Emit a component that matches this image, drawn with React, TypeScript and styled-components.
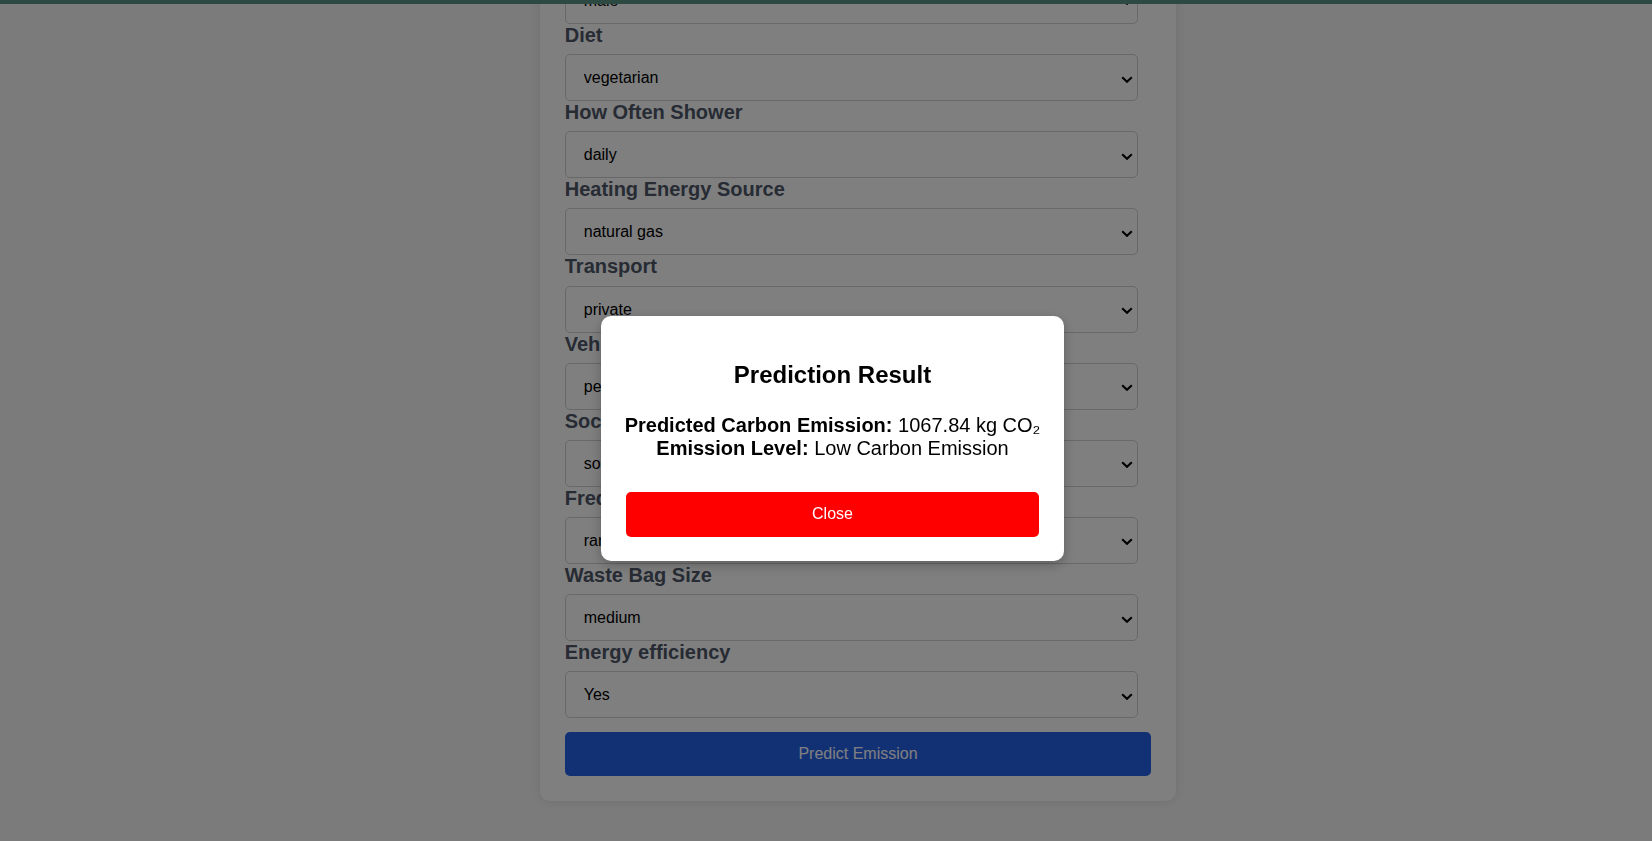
import React, { useState } from "react";
import styled, { createGlobalStyle } from "styled-components";

const GlobalStyle = createGlobalStyle`
  html, body {
    margin: 0;
    padding: 0;
    background: #f6f6f6;
    font-family: "Liberation Sans", Arial, sans-serif;
  }
  *, *::before, *::after { box-sizing: border-box; }
`;

const TopBar = styled.header`
  position: fixed;
  top: 0;
  left: 0;
  right: 0;
  height: 4px;
  background: #5a9484;
  z-index: 10;
`;

const Page = styled.main`
  display: flex;
  justify-content: center;
  padding-left: 64px;
  margin-top: -203.3px;
  padding-bottom: 40px;
`;

const Card = styled.form`
  width: 636.5px;
  background: #ffffff;
  border-radius: 10px;
  padding: 25px;
  box-shadow: 0 0 10px rgba(0, 0, 0, 0.1);
  display: flex;
  flex-direction: column;
`;

const FormTitle = styled.h1`
  margin: 0 0 20px;
  font-size: 24px;
  line-height: 28px;
  text-align: center;
  color: #1f2937;
`;

const Label = styled.label`
  display: block;
  font-size: 20px;
  line-height: 23px;
  font-weight: 700;
  color: #4e5769;
  margin-bottom: 7.15px;
`;

const SelectWrap = styled.div`
  position: relative;
  width: 97.8%;
`;

const Select = styled.select`
  appearance: none;
  -webkit-appearance: none;
  width: 100%;
  height: 47px;
  padding: 0 36px 0 18px;
  font-family: "Liberation Sans", Arial, sans-serif;
  font-size: 16px;
  color: #000;
  background: #fff;
  border: 1px solid #d0d0d0;
  border-radius: 5px;
  outline: none;
`;

const Chevron = styled.svg`
  position: absolute;
  right: 5px;
  top: calc(50% - 2px);
  width: 12px;
  height: 7px;
  pointer-events: none;
`;

const PredictButton = styled.button`
  margin-top: 14px;
  height: 44px;
  width: 100%;
  border: none;
  border-radius: 5px;
  background: #2563eb;
  color: #ffffff;
  font-family: "Liberation Sans", Arial, sans-serif;
  font-size: 16px;
  cursor: pointer;
`;

const Overlay = styled.div`
  position: fixed;
  inset: 0;
  background: rgba(0, 0, 0, 0.5);
  z-index: 100;
`;

const Modal = styled.div`
  position: absolute;
  left: calc(50% - 225px);
  top: calc(50% - 104.5px);
  width: 463px;
  background: #ffffff;
  border-radius: 10px;
  padding: 25px 25px 24px;
  box-shadow: 0 4px 12px rgba(0, 0, 0, 0.25);
  display: flex;
  flex-direction: column;
  text-align: center;
  color: #000;
`;

const ModalTitle = styled.h2`
  margin: 20px 0 25px;
  font-size: 24px;
  line-height: 27.6px;
  font-weight: 700;
`;

const ResultText = styled.div`
  margin: 0 0 32px;
  font-size: 20px;
  line-height: 23px;
`;

const ResultLine = styled.div`
  white-space: nowrap;
  display: flex;
  justify-content: center;
  gap: 0.28em;
`;

const CloseButton = styled.button`
  height: 45px;
  border: none;
  border-radius: 5px;
  background: #ff0000;
  color: #ffffff;
  font-family: "Liberation Sans", Arial, sans-serif;
  font-size: 16px;
  cursor: pointer;
`;

type Field = { label: string; options: string[]; value: string };

const fields: Field[] = [
  { label: "Body Type", options: ["underweight", "normal", "overweight", "obese"], value: "normal" },
  { label: "Sex", options: ["female", "male"], value: "male" },
  { label: "Diet", options: ["omnivore", "pescatarian", "vegetarian", "vegan"], value: "vegetarian" },
  { label: "How Often Shower", options: ["daily", "less frequently", "more frequently", "twice a day"], value: "daily" },
  { label: "Heating Energy Source", options: ["coal", "natural gas", "wood", "electricity"], value: "natural gas" },
  { label: "Transport", options: ["public", "walk/bicycle", "private"], value: "private" },
  { label: "Vehicle Type", options: ["petrol", "diesel", "hybrid", "lpg", "electric"], value: "petrol" },
  { label: "Social Activity", options: ["never", "sometimes", "often"], value: "sometimes" },
  { label: "Frequency of Traveling by Air", options: ["never", "rarely", "frequently", "very frequently"], value: "rarely" },
  { label: "Waste Bag Size", options: ["small", "medium", "large", "extra large"], value: "medium" },
  { label: "Energy efficiency", options: ["No", "Sometimes", "Yes"], value: "Yes" },
];

const ChevronIcon = () => (
  <Chevron viewBox="0 0 12 7" aria-hidden="true">
    <path d="M1.2 1.2 L6 5.8 L10.8 1.2" fill="none" stroke="#000" strokeWidth="2.1" strokeLinecap="butt" strokeLinejoin="miter" />
  </Chevron>
);

export default function App() {
  const [open, setOpen] = useState(true);
  return (
    <>
      <GlobalStyle />
      <TopBar />
      <Page>
        <Card onSubmit={(e) => { e.preventDefault(); setOpen(true); }}>
          <FormTitle>Carbon Emission Prediction</FormTitle>
          {fields.map((f) => {
            const id = f.label.replace(/\s+/g, "-").toLowerCase();
            return (
              <React.Fragment key={f.label}>
                <Label htmlFor={id}>{f.label}</Label>
                <SelectWrap>
                  <Select id={id} defaultValue={f.value}>
                    {f.options.map((o) => (
                      <option key={o} value={o}>{o}</option>
                    ))}
                  </Select>
                  <ChevronIcon />
                </SelectWrap>
              </React.Fragment>
            );
          })}
          <PredictButton type="submit">Predict Emission</PredictButton>
        </Card>
      </Page>
      {open && (
        <Overlay>
          <Modal role="dialog" aria-modal="true">
            <ModalTitle>Prediction Result</ModalTitle>
            <ResultText>
              <ResultLine><strong>Predicted Carbon Emission:</strong><span>1067.84 kg CO₂</span></ResultLine>
              <ResultLine><strong>Emission Level:</strong><span>Low Carbon Emission</span></ResultLine>
            </ResultText>
            <CloseButton type="button" onClick={() => setOpen(false)}>Close</CloseButton>
          </Modal>
        </Overlay>
      )}
    </>
  );
}
